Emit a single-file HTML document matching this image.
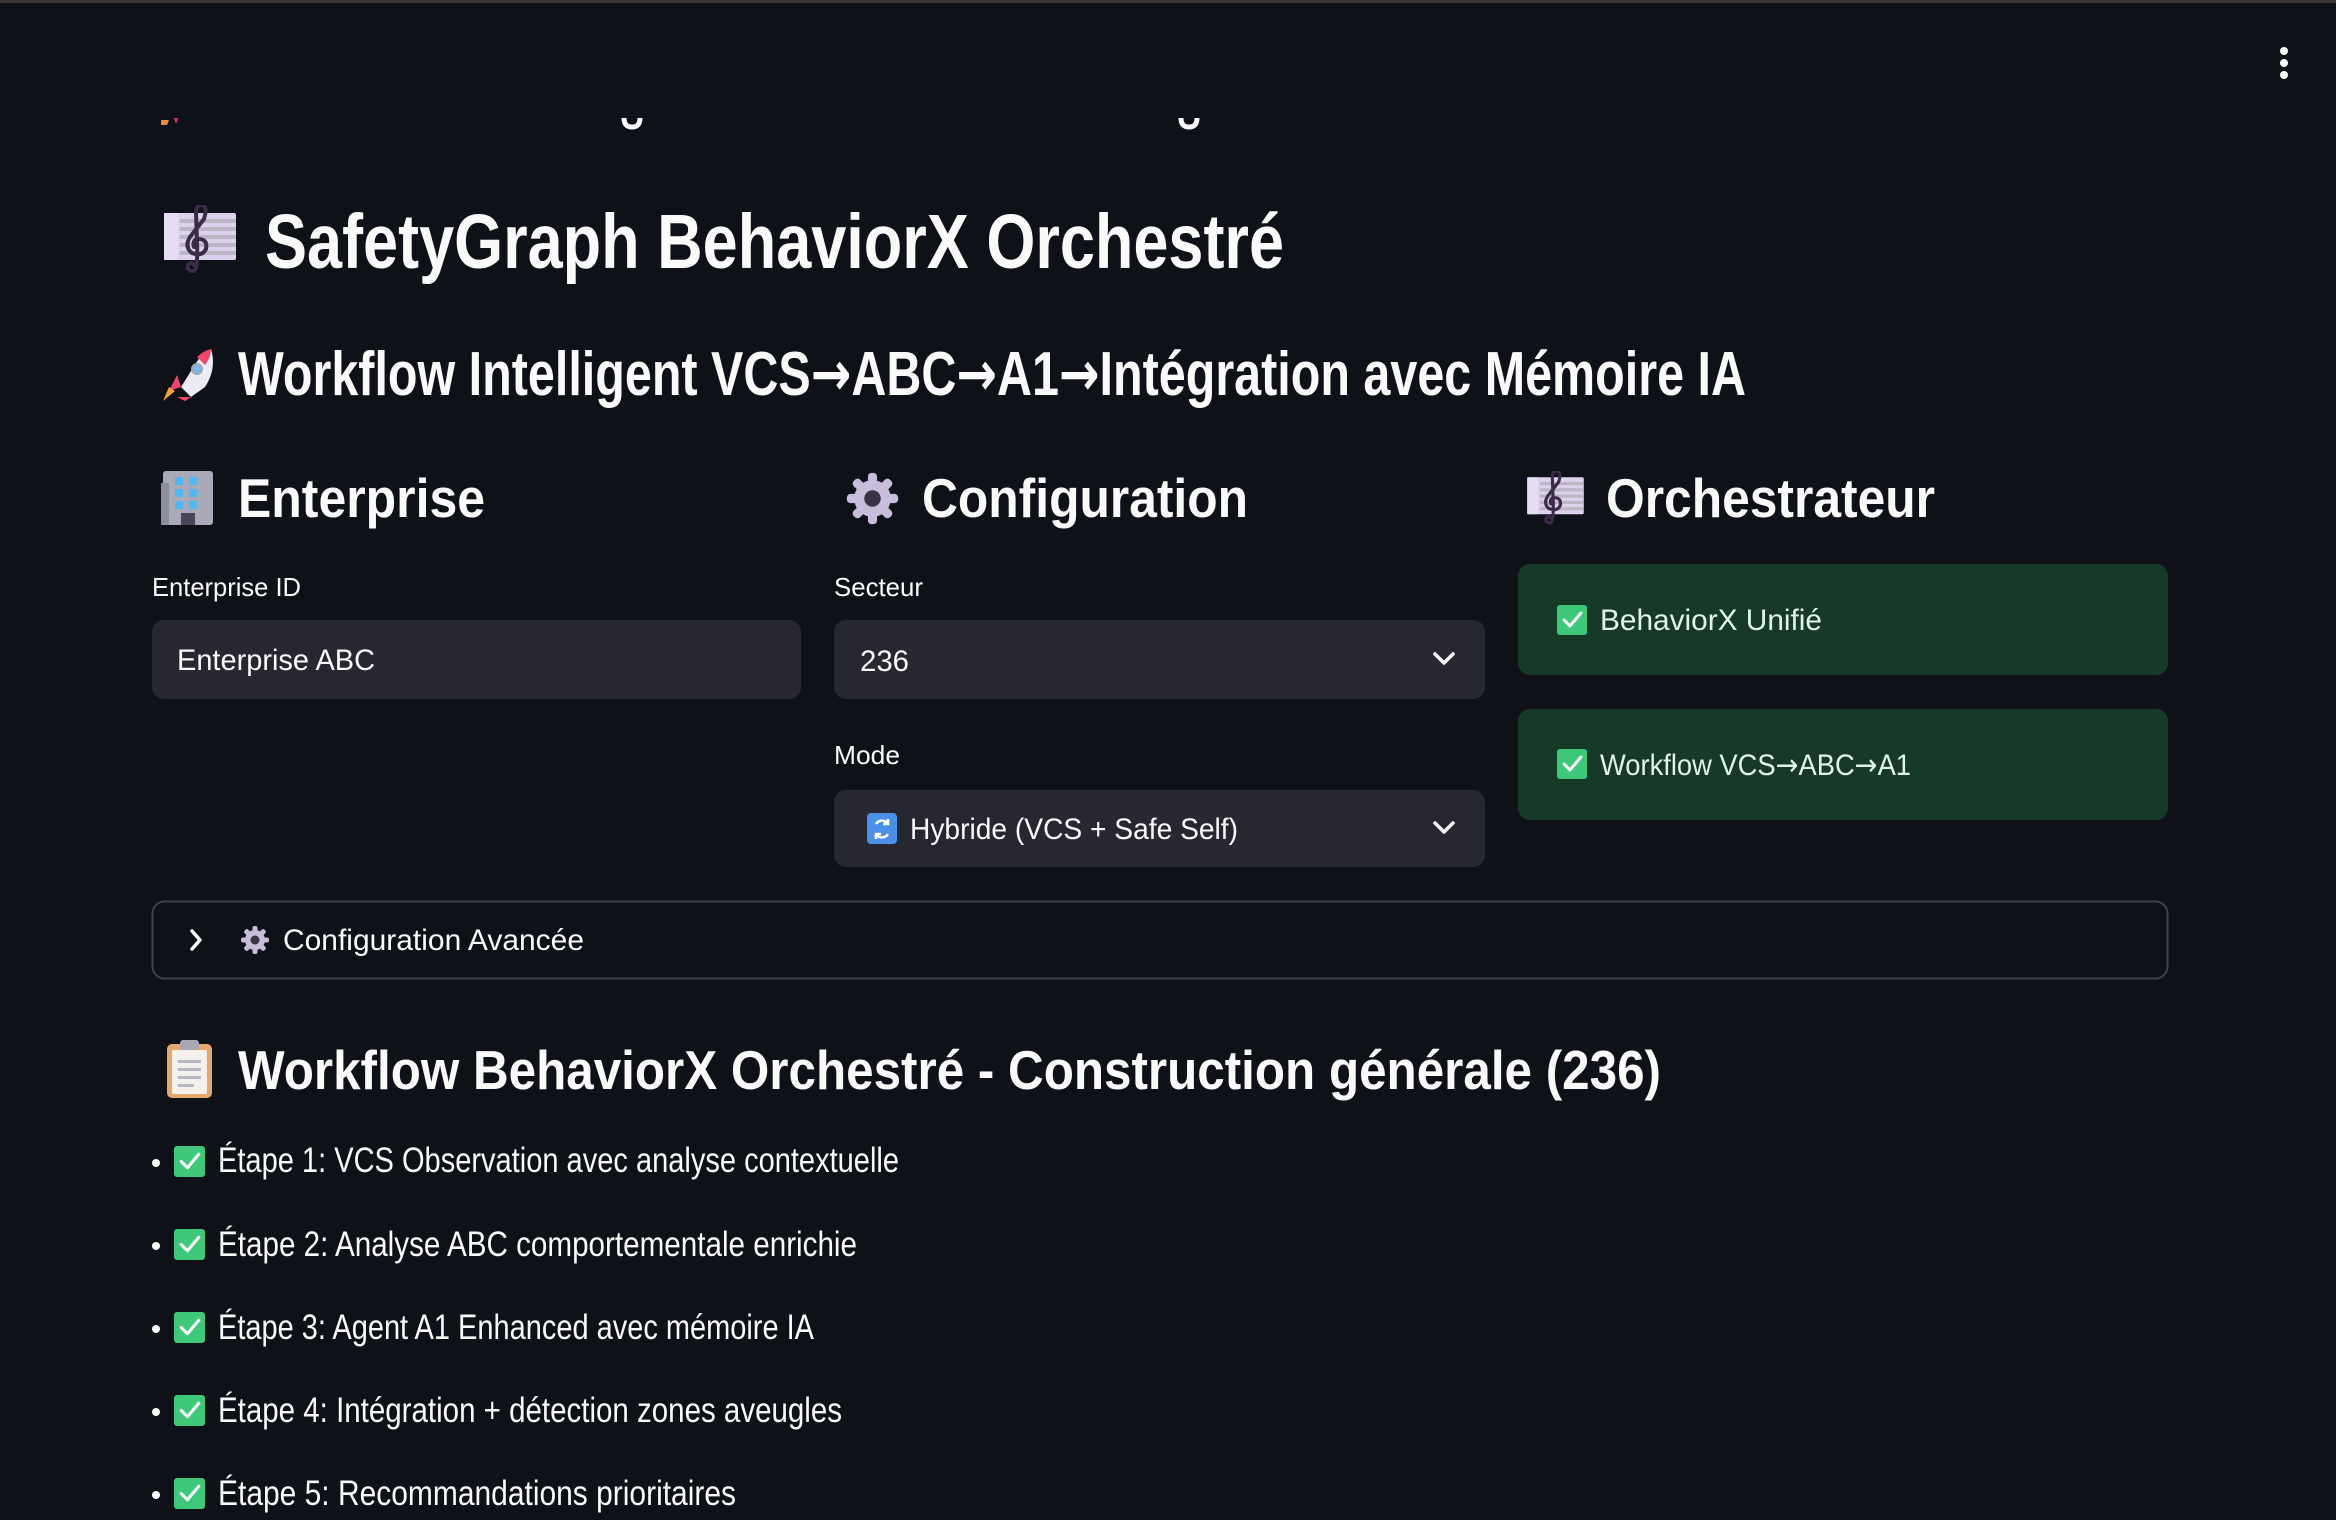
<!DOCTYPE html>
<html><head><meta charset="utf-8"><style>
html,body{margin:0;padding:0;background:#0e1117;width:2336px;height:1520px;overflow:hidden}
svg{display:block}
text{font-family:"Liberation Sans",sans-serif;fill:#fafafa}
.b{font-weight:bold}
.ar{font-family:"DejaVu Sans",sans-serif}
</style></head><body>
<svg width="2336" height="1520" viewBox="0 0 2336 1520" xmlns="http://www.w3.org/2000/svg">
<defs>
<symbol id="score" viewBox="0 0 72 70">
<rect x="0" y="8" width="72" height="47" rx="2" fill="#ddd2ee"/>
<rect x="0" y="8" width="14" height="47" fill="#e6ddf4"/>
<g fill="#bdb6c6"><rect x="16" y="14" width="56" height="4"/><rect x="16" y="22" width="56" height="4"/><rect x="16" y="30" width="56" height="4"/><rect x="16" y="38" width="56" height="4"/><rect x="16" y="46" width="56" height="4"/></g>
<path d="M30 66 q-8 0 -6 -6 q3 -4 6 0 M30 66 q4 -2 3 -30 L32 8 q0 -8 6 -8 q6 1 2 14 l-14 18 q-6 10 2 16 q10 4 14 -4 q2 -10 -8 -10 q-6 1 -4 8" fill="none" stroke="#3b2a4a" stroke-width="4" stroke-linecap="round"/>
</symbol>
<symbol id="chk" viewBox="0 0 30 30">
<rect x="0" y="0" width="30" height="30" rx="3" fill="#3ec87a"/>
<path d="M7 15 l6 6 l11 -13" fill="none" stroke="#fff" stroke-width="3" stroke-linecap="round" stroke-linejoin="round"/>
</symbol>
<symbol id="gear" viewBox="0 0 60 60">
<g fill="#c8bedc">
<circle cx="30" cy="30" r="20"/>
<rect x="25" y="2" width="10" height="56" rx="4"/>
<rect x="2" y="25" width="56" height="10" rx="4"/>
<rect x="25" y="2" width="10" height="56" rx="4" transform="rotate(45 30 30)"/>
<rect x="25" y="2" width="10" height="56" rx="4" transform="rotate(-45 30 30)"/>
</g>
<circle cx="30" cy="30" r="9" fill="#3a3448"/>
</symbol>
</defs>

<rect x="0" y="0" width="2336" height="3" fill="#3b3436"/>
<g fill="#fafafa"><circle cx="2284" cy="51" r="4"/><circle cx="2284" cy="63" r="4"/><circle cx="2284" cy="75" r="4"/></g>

<path d="M161 120 h8 l-2 5 h-6z" fill="#f08a3c"/><path d="M174 118 l4 0 -2 6z" fill="#e23a6a"/>
<path d="M624 118 q0 9 8 9 q8 0 8 -9" fill="none" stroke="#fafafa" stroke-width="5"/>
<path d="M1181 118 q0 9 8 9 q8 0 8 -9" fill="none" stroke="#fafafa" stroke-width="5"/>

<use href="#score" x="164" y="205" width="72" height="70"/>
<text class="b" x="265" y="268" font-size="77" textLength="1019" lengthAdjust="spacingAndGlyphs">SafetyGraph BehaviorX Orchestré</text>

<g transform="translate(161,347)">
<path d="M50 2 q6 20 -6 38 l-14 10 l-10 -10 l10 -16 q10 -18 20 -22z" fill="#eceaf2"/>
<path d="M50 2 q-8 2 -14 8 l8 8 q6 -8 6 -16z" fill="#f0446a"/>
<circle cx="36" cy="22" r="5" fill="#7fb6f0" stroke="#9aa" stroke-width="2"/>
<path d="M20 40 l-12 4 l8 -16z M30 50 l-6 4 l-8 -4z" fill="#f0446a"/>
<path d="M14 44 l-12 10 l6 -14z" fill="#f5a03a"/>
</g>
<text class="b" x="238" y="395" font-size="62" textLength="1508" lengthAdjust="spacingAndGlyphs">Workflow Intelligent VCS<tspan class="ar">→</tspan>ABC<tspan class="ar">→</tspan>A1<tspan class="ar">→</tspan>Intégration avec Mémoire IA</text>

<g transform="translate(161,471)">
<rect x="2" y="0" width="50" height="54" rx="3" fill="#a9a9b8"/>
<rect x="0" y="12" width="8" height="42" fill="#8d8d9c"/>
<g fill="#4fb8f0">
<rect x="14" y="6" width="8" height="8"/><rect x="28" y="6" width="8" height="8"/>
<rect x="14" y="18" width="8" height="8"/><rect x="28" y="18" width="8" height="8"/>
<rect x="14" y="30" width="8" height="8"/><rect x="28" y="30" width="8" height="8"/>
</g>
<rect x="20" y="42" width="14" height="12" fill="#4a4458"/>
</g>
<text class="b" x="238" y="517" font-size="55" textLength="247" lengthAdjust="spacingAndGlyphs">Enterprise</text>
<use href="#gear" x="845" y="471" width="55" height="55"/>
<text class="b" x="922" y="517" font-size="55" textLength="326" lengthAdjust="spacingAndGlyphs">Configuration</text>
<use href="#score" x="1527" y="471" width="57" height="55"/>
<text class="b" x="1606" y="517" font-size="55" textLength="329" lengthAdjust="spacingAndGlyphs">Orchestrateur</text>

<text x="152" y="596" font-size="26" textLength="149" lengthAdjust="spacingAndGlyphs">Enterprise ID</text>
<rect x="152" y="620" width="649" height="79" rx="12" fill="#262730"/>
<text x="177" y="670" font-size="30" textLength="198" lengthAdjust="spacingAndGlyphs">Enterprise ABC</text>

<text x="834" y="596" font-size="26" textLength="89" lengthAdjust="spacingAndGlyphs">Secteur</text>
<rect x="834" y="620" width="651" height="79" rx="12" fill="#262730"/>
<text x="860" y="671" font-size="30" textLength="49" lengthAdjust="spacingAndGlyphs">236</text>
<path d="M1435 654 l9 9 l9 -9" fill="none" stroke="#fafafa" stroke-width="3.5" stroke-linecap="round" stroke-linejoin="round"/>

<text x="834" y="764" font-size="26" textLength="66" lengthAdjust="spacingAndGlyphs">Mode</text>
<rect x="834" y="790" width="651" height="77" rx="12" fill="#262730"/>
<rect x="867" y="813" width="30" height="31" rx="4" fill="#4a90e8"/>
<path d="M876 824 a7 7 0 0 1 12 0 m0 -5 v5 h-5 M888 834 a7 7 0 0 1 -12 0 m0 5 v-5 h5" fill="none" stroke="#fff" stroke-width="2.5"/>
<text x="910" y="839" font-size="30" textLength="328" lengthAdjust="spacingAndGlyphs">Hybride (VCS + Safe Self)</text>
<path d="M1435 823 l9 9 l9 -9" fill="none" stroke="#fafafa" stroke-width="3.5" stroke-linecap="round" stroke-linejoin="round"/>

<rect x="1518" y="564" width="650" height="111" rx="12" fill="#173928"/>
<use href="#chk" x="1557" y="605" width="30" height="30"/>
<text x="1600" y="630" font-size="30" textLength="222" lengthAdjust="spacingAndGlyphs" style="fill:#dff5e6">BehaviorX Unifié</text>
<rect x="1518" y="709" width="650" height="111" rx="12" fill="#173928"/>
<use href="#chk" x="1557" y="749" width="30" height="30"/>
<text x="1600" y="775" font-size="30" textLength="311" lengthAdjust="spacingAndGlyphs" style="fill:#dff5e6">Workflow VCS<tspan class="ar">→</tspan>ABC<tspan class="ar">→</tspan>A1</text>

<rect x="152.5" y="901.5" width="2015" height="77" rx="12" fill="none" stroke="#3d4049" stroke-width="2"/>
<path d="M192 931 l8 9 l-8 9" fill="none" stroke="#fafafa" stroke-width="3.5" stroke-linecap="round" stroke-linejoin="round"/>
<use href="#gear" x="240" y="925" width="30" height="30"/>
<text x="283" y="950" font-size="30" textLength="301" lengthAdjust="spacingAndGlyphs">Configuration Avancée</text>

<g transform="translate(167,1040)">
<rect x="0" y="4" width="45" height="54" rx="5" fill="#e3a86a"/>
<rect x="5" y="10" width="35" height="44" rx="2" fill="#f4f0ec"/>
<rect x="13" y="0" width="19" height="10" rx="3" fill="#a8a8b4"/>
<g fill="#b8b8c4"><rect x="11" y="20" width="23" height="3"/><rect x="11" y="28" width="23" height="3"/><rect x="11" y="36" width="23" height="3"/><rect x="11" y="44" width="16" height="3"/></g>
</g>
<text class="b" x="238" y="1089" font-size="55" textLength="1423" lengthAdjust="spacingAndGlyphs">Workflow BehaviorX Orchestré - Construction générale (236)</text>

<g fill="#fafafa">
<circle cx="156" cy="1163" r="4"/><circle cx="156" cy="1246" r="4"/><circle cx="156" cy="1329" r="4"/><circle cx="156" cy="1412" r="4"/><circle cx="156" cy="1495" r="4"/>
</g>
<use href="#chk" x="174" y="1146" width="31" height="31"/>
<use href="#chk" x="174" y="1229" width="31" height="31"/>
<use href="#chk" x="174" y="1312" width="31" height="31"/>
<use href="#chk" x="174" y="1395" width="31" height="31"/>
<use href="#chk" x="174" y="1478" width="31" height="31"/>
<text x="218" y="1172" font-size="35" textLength="681" lengthAdjust="spacingAndGlyphs">Étape 1: VCS Observation avec analyse contextuelle</text>
<text x="218" y="1256" font-size="35" textLength="639" lengthAdjust="spacingAndGlyphs">Étape 2: Analyse ABC comportementale enrichie</text>
<text x="218" y="1339" font-size="35" textLength="596" lengthAdjust="spacingAndGlyphs">Étape 3: Agent A1 Enhanced avec mémoire IA</text>
<text x="218" y="1422" font-size="35" textLength="624" lengthAdjust="spacingAndGlyphs">Étape 4: Intégration + détection zones aveugles</text>
<text x="218" y="1505" font-size="35" textLength="518" lengthAdjust="spacingAndGlyphs">Étape 5: Recommandations prioritaires</text>
</svg>
</body></html>
